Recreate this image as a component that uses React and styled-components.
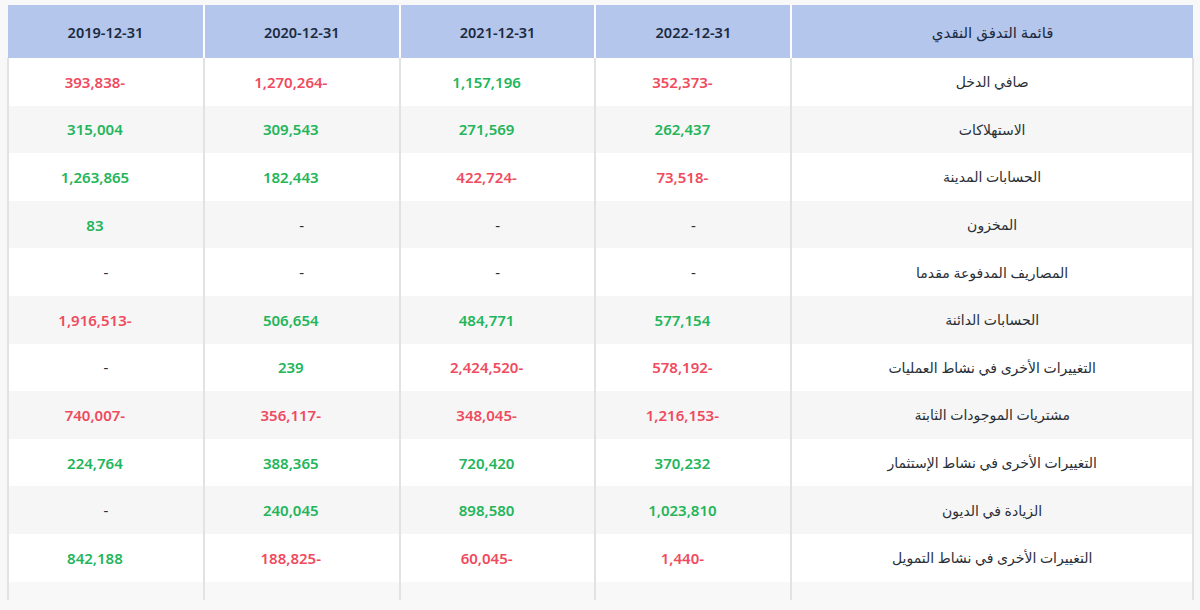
import React from 'react'
import styled, { createGlobalStyle } from 'styled-components'

const years = ['2022-12-31', '2021-12-31', '2020-12-31', '2019-12-31']

const rows = [
  ['صافي الدخل', '-352,373', '1,157,196', '-1,270,264', '-393,838'],
  ['الاستهلاكات', '262,437', '271,569', '309,543', '315,004'],
  ['الحسابات المدينة', '-73,518', '-422,724', '182,443', '1,263,865'],
  ['المخزون', '-', '-', '-', '83'],
  ['المصاريف المدفوعة مقدما', '-', '-', '-', '-'],
  ['الحسابات الدائنة', '577,154', '484,771', '506,654', '-1,916,513'],
  ['التغييرات الأخرى في نشاط العمليات', '-578,192', '-2,424,520', '239', '-'],
  ['مشتريات الموجودات الثابتة', '-1,216,153', '-348,045', '-356,117', '-740,007'],
  ['التغييرات الأخرى في نشاط الإستثمار', '370,232', '720,420', '388,365', '224,764'],
  ['الزيادة في الديون', '1,023,810', '898,580', '240,045', '-'],
  ['التغييرات الأخرى في نشاط التمويل', '-1,440', '-60,045', '-188,825', '842,188'],
]

function tone(v) {
  if (v === '-') return 'none'
  return v.startsWith('-') ? 'neg' : 'pos'
}

// negative values are shown with the sign trailing
function show(v) {
  if (v === '-') return v
  return v.startsWith('-') ? v.slice(1) + '-' : v
}

function CashFlowTable() {
  return (
    <Page>
      <GlobalStyle />
      <Table>
        <colgroup>
          <col style={{ width: '33.9%' }} />
          <col />
          <col />
          <col />
          <col />
        </colgroup>
        <thead>
          <tr>
            <HeadCell $title>قائمة التدفق النقدي</HeadCell>
            {years.map(y => (
              <HeadCell key={y}>{y}</HeadCell>
            ))}
          </tr>
        </thead>
        <tbody>
          {rows.map(([label, ...vals], i) => (
            <Row key={label} $alt={i % 2 === 1}>
              <Label>{label}</Label>
              {vals.map((v, j) => (
                <Value key={j} $tone={tone(v)}>{show(v)}</Value>
              ))}
            </Row>
          ))}
          <Filler>
            <td /><td /><td /><td /><td />
          </Filler>
        </tbody>
      </Table>
    </Page>
  )
}

export default function App() {
  return <CashFlowTable />
}

const GlobalStyle = createGlobalStyle`
  html, body {
    margin: 0;
    padding: 0;
    background: #f8f8f8;
  }
  body {
    font-family: "Noto Sans", "DejaVu Sans", sans-serif;
  }
`

const Page = styled.div`
  width: 1200px;
  height: 610px;
  box-sizing: border-box;
  padding: 5px 6px 10px 7px;
  background: #f8f8f8;
`

const Table = styled.table`
  direction: rtl;
  width: 100%;
  border-collapse: collapse;
  table-layout: fixed;
  font-size: 14px;
`

const HeadCell = styled.th`
  height: 53px;
  padding: 0;
  background: #b4c6ec;
  color: #1b2a40;
  font-weight: ${p => (p.$title ? 500 : 600)};
  font-size: ${p => (p.$title ? '15px' : '14.5px')};
  text-align: center;
  border-left: 2px solid #ffffff;
  &:last-child {
    border-left: none;
  }
`

const Row = styled.tr`
  height: 47.6px;
  background: ${p => (p.$alt ? '#f6f6f6' : '#ffffff')};
`

const Cell = styled.td`
  padding: 0;
  text-align: center;
  border-left: 2px solid #e2e2e2;
  border-right: 2px solid #e2e2e2;
`

const Label = styled(Cell)`
  color: #2a2f36;
  font-size: 14px;
  font-weight: 400;
`

const Value = styled(Cell)`
  direction: ltr;
  padding-right: ${p => (p.$tone === 'none' ? '0' : '22px')};
  font-size: 15px;
  color: ${p =>
    p.$tone === 'neg' ? '#ef4a5e' : p.$tone === 'pos' ? '#22b55a' : '#2a2f36'};
  font-weight: ${p => (p.$tone === 'none' ? 400 : 600)};
`

const Filler = styled.tr`
  height: 18px;
  background: transparent;
  td {
    padding: 0;
    border-left: 2px solid #e2e2e2;
    border-right: 2px solid #e2e2e2;
  }
`
